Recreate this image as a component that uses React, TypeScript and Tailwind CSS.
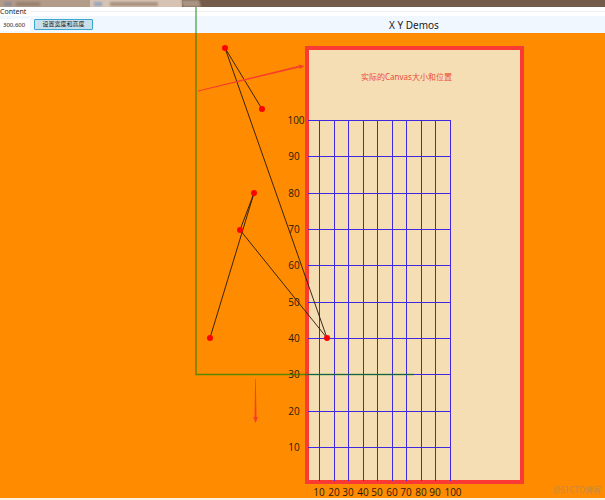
import { useState } from 'react'

type Point = [number, number]

// where the axes of the plot meet, and the length of ten units on each axis
const ORIGIN: Point = [305, 477]
const STEP_X = 14.55
const STEP_Y = 36.35
const TICKS = [10, 20, 30, 40, 50, 60, 70, 80, 90, 100]

const POINTS: Point[] = [
  [210, 331],
  [254, 186],
  [240, 223],
  [327, 331],
  [225, 41],
  [262, 102],
]

const tickX = (t: number) => Math.floor(ORIGIN[0] + (t / 10) * STEP_X)
const tickY = (t: number) => Math.floor(ORIGIN[1] - (t / 10) * STEP_Y)

function TabStrip() {
  return (
    <div className="flex h-[7px] overflow-hidden bg-[#745b4a]">
      <div className="flex w-[90px] items-center gap-1 bg-[#b39b8a] pl-1">
        <span className="h-1 w-2 bg-[#8f8b90] blur-[1px]" />
        <span className="h-1 w-6 bg-[#98816f] blur-[1px]" />
      </div>
      <div className="flex w-[92px] items-center gap-2 bg-[#d6c3b3] pl-1">
        <span className="h-1 w-2 bg-[#94a5bd] blur-[1px]" />
        <span className="h-1 w-12 bg-[#a8927f] blur-[1px]" />
      </div>
      <div className="w-[18px] skew-x-12 bg-[#a99484] blur-[1px]" />
    </div>
  )
}

function GroupCaption() {
  return (
    <div className="flex h-[9px] items-center gap-1 bg-white">
      <p className="text-[7px] leading-[9px] text-[#222222]">Content</p>
      <span className="h-px flex-1 bg-[#eceff3]" />
    </div>
  )
}

function Toolbar() {
  const [size, setSize] = useState('300,600')

  return (
    <header className="flex h-[17px] items-center bg-[#f0f7ff]">
      <div className="flex w-[223px] shrink-0 items-center gap-1">
        <input
          type="text"
          aria-label="Width and height"
          value={size}
          onChange={(e) => setSize(e.target.value)}
          className="h-3 w-[30px] bg-white pl-[3px] text-[6px] leading-3 text-[#222222] outline-none"
        />
        <button
          type="button"
          className="h-[11px] w-[59px] rounded-[1px] border border-[#3fa6cc] bg-[#c9dfec] text-[6px] leading-[9px] text-[#111111]"
        >
          设置宽度和高度
        </button>
      </div>
      <h1 className="flex-1 text-center text-[10px] leading-[18px] text-[#222222]">X Y Demos</h1>
    </header>
  )
}

function Grid() {
  return (
    <g fill="none" stroke="#4028e0" strokeWidth="1">
      {TICKS.map((t) => (
        <g key={t}>
          <path d={`M${tickX(t) + 0.5} ${tickY(100)}V${ORIGIN[1] - 3}`} />
          <path d={`M${ORIGIN[0] + 3} ${tickY(t) + 0.5}H${tickX(100) + 1}`} />
        </g>
      ))}
    </g>
  )
}

function Labels() {
  return (
    <g fontSize="9" fill="#2b1a08" textAnchor="middle">
      {TICKS.map((t) => (
        <g key={t} fontSize="10">
          <text x={t === 100 ? 453 : tickX(t)} y={489}>{t}</text>
          <text x={t === 100 ? 296 : 294} y={tickY(t) + 4}>{t}</text>
        </g>
      ))}
    </g>
  )
}

function Plot() {
  return (
    <svg
      className="pointer-events-none absolute top-0 left-0 font-['Open_Sans',sans-serif]"
      width="605"
      height="493"
      role="img"
      aria-label="Points joined by lines over a grid"
    >
      <Grid />
      <Labels />
      <path d="M196 0V367.5H414" fill="none" stroke="#008000" strokeOpacity="0.65" strokeWidth="1.4" />
      <polyline points={POINTS.join(' ')} fill="none" stroke="#24160a" strokeWidth="0.9" />
      {POINTS.map(([x, y]) => (
        <circle key={`${x}-${y}`} cx={x} cy={y} r="3" fill="#ff0000" />
      ))}
      <g fill="#f83c2c">
        <path d="M198 83.6L299 58.8L298.6 57.6L304.5 59L299.8 62L299.4 60.4L198 84.6Z" />
        <path d="M255.2 372H255.8L256.5 410H258L255.5 416L253.3 410H254.5Z" />
      </g>
    </svg>
  )
}

export default function App() {
  return (
    <div className="bg-[#fff3e0] pb-0.5 font-['Noto_Sans','Noto_Sans_CJK_SC',sans-serif]">
      <TabStrip />
      <div className="relative">
        <GroupCaption />
        <Toolbar />
        <main className="h-[465px] bg-[#ff8c00] pt-[13px]">
          <div className="ml-[305px] h-[438px] w-[219px] border-4 border-[#fb3a34] bg-[#f5deb3] pt-5 pr-4 text-center text-[8px] leading-[14px] text-[#ec4c3c]">
            实际的Canvas大小和位置
          </div>
        </main>
        <Plot />
        <span className="absolute right-1 bottom-0 text-[8px] leading-4 text-[#c58a48]">@51CTO博客</span>
      </div>
    </div>
  )
}
